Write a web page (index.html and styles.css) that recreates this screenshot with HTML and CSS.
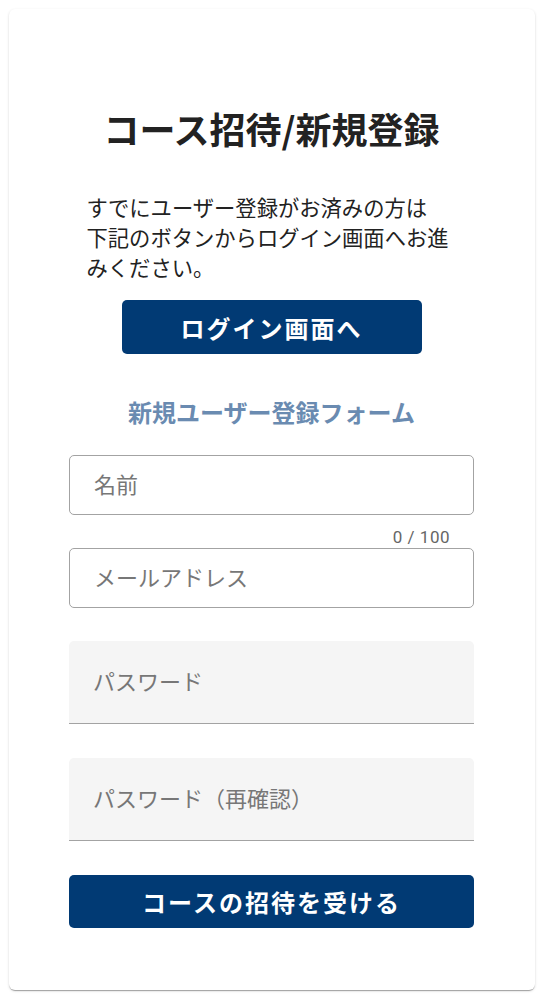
FILE: index.html
```html
<!DOCTYPE html>
<html lang="ja">
<head>
    <meta charset="UTF-8">
    <meta name="viewport" content="width=device-width, initial-scale=1.0">
    <title>コース招待/新規登録</title>
    <link rel="stylesheet" href="styles.css">
</head>
<body>
    <div class="card">
        <h1 class="title">コース招待/新規登録</h1>
        <p class="lead">すでにユーザー登録がお済みの方は<br>下記のボタンからログイン画面へお進みください。</p>
        <div class="center">
            <button type="button" class="btn btn-login">ログイン画面へ</button>
        </div>

        <h2 class="subtitle">新規ユーザー登録フォーム</h2>

        <form class="signup">
            <input type="text" class="field outlined" placeholder="名前" maxlength="100">
            <div class="counter">0 / 100</div>
            <input type="email" class="field outlined" placeholder="メールアドレス">
            <input type="password" class="field filled" placeholder="パスワード">
            <input type="password" class="field filled" placeholder="パスワード（再確認）">
            <button type="button" class="btn btn-submit">コースの招待を受ける</button>
        </form>
    </div>
</body>
</html>
```

FILE: styles.css
```css
body {
    font-family: "Noto Sans CJK JP", "Noto Sans", sans-serif;
    background-color: #fff;
    color: #222;
    margin: 0;
    padding: 9px;
}

.card {
    width: 526px;
    height: 981px;
    box-sizing: border-box;
    padding: 95px 61px 0 60px;
    border-radius: 6px;
    background-color: #fff;
    box-shadow: 0 2px 1px -1px rgba(0, 0, 0, 0.2), 0 1px 1px 0 rgba(0, 0, 0, 0.14), 0 1px 3px 0 rgba(0, 0, 0, 0.12);
}

.title {
    margin: 0;
    font-size: 36px;
    line-height: 48px;
    font-weight: 700;
    text-align: center;
}

.lead {
    width: 370px;
    margin: 40px auto 0;
    font-size: 21.3px;
    line-height: 30px;
}

.center {
    display: flex;
    justify-content: center;
    margin-top: 18px;
}

.btn {
    font-family: "Noto Sans CJK JP", "Noto Sans", sans-serif;
    font-size: 24px;
    font-weight: 700;
    letter-spacing: 2px;
    color: #fff;
    background-color: #013a74; /* navy */
    border: none;
    border-radius: 5px;
    cursor: pointer;
}

.btn-login {
    width: 300px;
    height: 54px;
}

.subtitle {
    margin: 42px 0 0;
    font-size: 24px;
    line-height: 32px;
    font-weight: 700;
    color: #6a8bb1;
    text-align: center;
}

.signup {
    display: flex;
    flex-direction: column;
    margin-top: 27px;
}

.field {
    display: block;
    width: 100%;
    box-sizing: border-box;
    padding: 0 24px 4px;
    font-family: "Noto Sans CJK JP", "Noto Sans", sans-serif;
    font-size: 22px;
    color: #222;
    outline: none;
}

.field::placeholder {
    color: #777;
}

.outlined {
    height: 60px;
    border: 1px solid #a3a3a3;
    border-radius: 5px;
    background-color: #fff;
}

.filled {
    height: 83px;
    border: none;
    border-bottom: 1px solid #a3a3a3;
    border-radius: 5px 5px 0 0;
    background-color: #f5f5f5;
    margin-top: 33px;
    padding-bottom: 5px;
}

.filled + .filled {
    margin-top: 34px;
}

.counter {
    font-family: Roboto, "Noto Sans", sans-serif;
    font-size: 17px;
    line-height: 20px;
    color: #666;
    text-align: right;
    padding-right: 24px;
    margin: 12px 0 1px;
    letter-spacing: 0.5px;
}

.btn-submit {
    width: 100%;
    height: 53px;
    margin-top: 34px;
}
```
